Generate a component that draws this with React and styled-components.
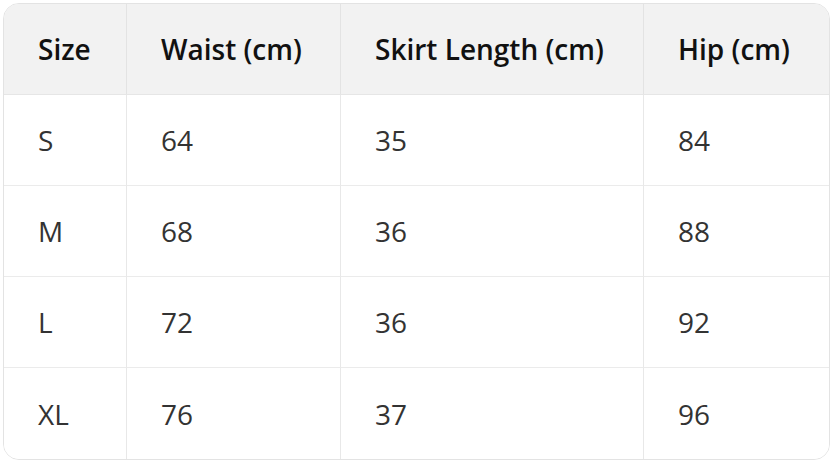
import React from 'react';
import styled, { createGlobalStyle } from 'styled-components';

const GlobalStyle = createGlobalStyle`
    html, body {
        margin: 0;
        padding: 0;
        background: #ffffff;
    }
    body {
        font-family: "Open Sans", "Noto Sans", sans-serif;
    }
`

const Page = styled.div`
    width: 833px;
    height: 464px;
    box-sizing: border-box;
    padding: 3px 3px 4px 3px;
`

const Table = styled.table`
    width: 827px;
    border-collapse: separate;
    border-spacing: 0;
    border: 1px solid #e3e3e3;
    border-radius: 16px;
    overflow: hidden;
    table-layout: fixed;
`

const HeadCell = styled.th`
    width: ${(p) => p.$w}px;
    height: 91px;
    box-sizing: border-box;
    padding: 0 0 0 34px;
    text-align: left;
    font-size: 28px;
    font-weight: 600;
    color: #111111;
    background: #f2f2f2;
    border-left: ${(p) => (p.$first ? 'none' : '1px solid #e3e3e3')};
    border-bottom: 1px solid #e6e6e6;
`

const Cell = styled.td`
    height: 91px;
    box-sizing: border-box;
    padding: 0 0 0 34px;
    font-size: 28px;
    font-weight: 400;
    color: #333333;
    background: #ffffff;
    border-left: ${(p) => (p.$first ? 'none' : '1px solid #e8e8e8')};
    border-bottom: ${(p) => (p.$last ? 'none' : '1px solid #ebebeb')};
`

const columns = [
    { title: 'Size', w: 122 },
    { title: 'Waist (cm)', w: 214 },
    { title: 'Skirt Length (cm)', w: 303 },
    { title: 'Hip (cm)', w: 186 },
]

const rows = [
    ['S', '64', '35', '84'],
    ['M', '68', '36', '88'],
    ['L', '72', '36', '92'],
    ['XL', '76', '37', '96'],
]

const App = () => {
    return (
        <Page>
            <GlobalStyle />
            <Table>
                <thead>
                    <tr>
                        {columns.map((c, i) => (
                            <HeadCell key={c.title} $w={c.w} $first={i === 0}>{c.title}</HeadCell>
                        ))}
                    </tr>
                </thead>
                <tbody>
                    {rows.map((r, ri) => (
                        <tr key={r[0]}>
                            {r.map((v, ci) => (
                                <Cell key={ci} $first={ci === 0} $last={ri === rows.length - 1}>{v}</Cell>
                            ))}
                        </tr>
                    ))}
                </tbody>
            </Table>
        </Page>
    );
};

export default App;
